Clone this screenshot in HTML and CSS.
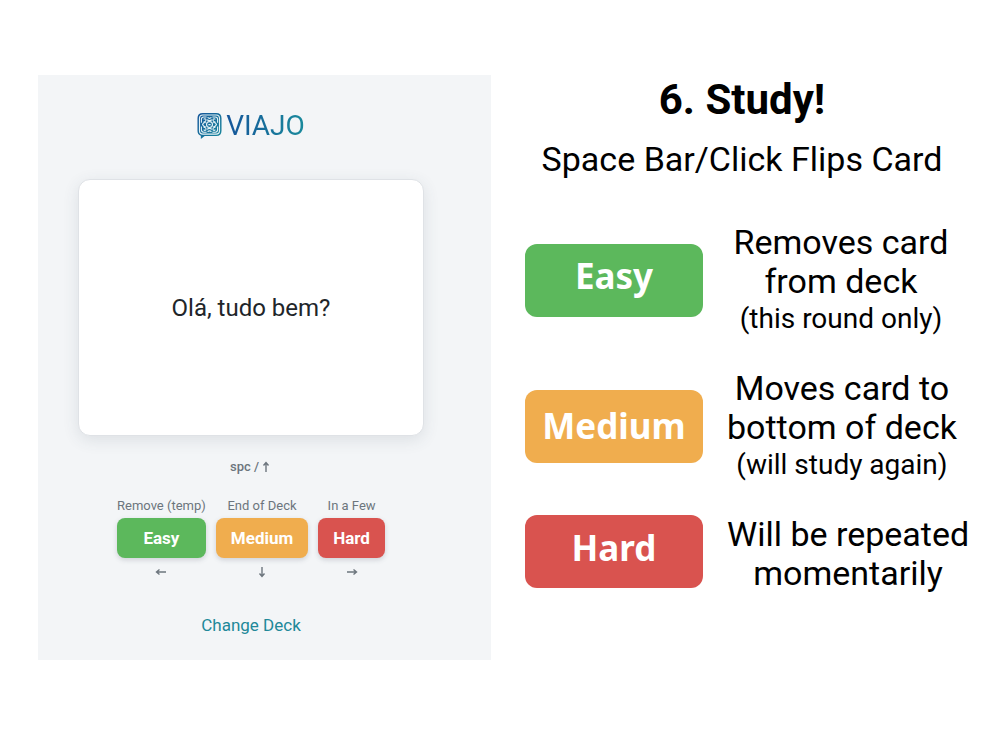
FILE: index.html
```html
<!DOCTYPE html>
<html lang="en">
<head>
<meta charset="utf-8">
<meta name="viewport" content="width=device-width, initial-scale=1">
<title>Viajo – Study</title>
<link rel="stylesheet" href="styles.css">
</head>
<body>
<main class="slide">
  <section class="app">
    <div class="logo">
      <svg class="logo-mark" viewBox="0 0 26 28" fill="none" aria-hidden="true">
        <defs>
          <linearGradient id="brand" x1="0" y1="0" x2="1" y2="1">
            <stop offset="0" stop-color="#15559a"/>
            <stop offset="1" stop-color="#198a9c"/>
          </linearGradient>
          <g id="scroll">
            <path d="M4.600 10.500V7Q4.600 4.600 7 4.600H10M6.800 9.800Q9.800 9.500 9.300 7Q8.200 5.800 6.900 7.200"/>
          </g>
        </defs>
        <path d="M6 .5H20Q25.500 .5 25.500 6V19Q25.500 24.500 20 24.500H8L4 27.500V24.200Q.5 23 .5 19V6Q.5 .5 6 .5Z" fill="url(#brand)"/>
        <g stroke="#e4f1f5" stroke-width="1.200">
          <rect x="2.600" y="2.600" width="20.800" height="19.800" rx="3.500"/>
          <circle cx="13" cy="12.500" r="3.100"/>
          <path d="M9 10.500Q6.800 9.800 5.800 12.500Q6.800 15.200 9 14.500M17 10.500Q19.200 9.800 20.200 12.500Q19.200 15.200 17 14.500"/>
          <path d="M10.500 7.500Q13 9.500 15.500 7.500M11 5Q13 7 15 5M10.500 17.500Q13 15.500 15.500 17.500M11 20Q13 18 15 20M11.800 12.500H14.200"/>
        </g>
        <g stroke="#e4f1f5" stroke-width="1.100">
          <use href="#scroll"/>
          <use href="#scroll" transform="matrix(-1 0 0 1 26 0)"/>
          <use href="#scroll" transform="matrix(1 0 0 -1 0 25)"/>
          <use href="#scroll" transform="matrix(-1 0 0 -1 26 25)"/>
        </g>
      </svg>
      <span class="logo-name">VIAJO</span>
    </div>
    <button class="card" type="button">Olá, tudo bem?</button>
    <p class="flip-hint">spc /
      <svg class="arrow up" viewBox="0 0 12 12" role="img" aria-label="up arrow"><path d="M1 6H10.500M7.500 3.500L10.500 6L7.500 8.500"/></svg>
    </p>
    <div class="answers">
      <div class="answer">
        <label for="easy">Remove (temp)</label>
        <button id="easy" class="choice easy" type="button">Easy</button>
        <svg class="arrow left" viewBox="0 0 12 12" role="img" aria-label="left arrow"><path d="M1 6H10.500M7.500 3.500L10.500 6L7.500 8.500"/></svg>
      </div>
      <div class="answer">
        <label for="medium">End of Deck</label>
        <button id="medium" class="choice medium" type="button">Medium</button>
        <svg class="arrow down" viewBox="0 0 12 12" role="img" aria-label="down arrow"><path d="M1 6H10.500M7.500 3.500L10.500 6L7.500 8.500"/></svg>
      </div>
      <div class="answer">
        <label for="hard">In a Few</label>
        <button id="hard" class="choice hard" type="button">Hard</button>
        <svg class="arrow" viewBox="0 0 12 12" role="img" aria-label="right arrow"><path d="M1 6H10.500M7.500 3.500L10.500 6L7.500 8.500"/></svg>
      </div>
    </div>
    <a class="change" href="#">Change Deck</a>
  </section>

  <section class="guide">
    <h1>6. Study!</h1>
    <p class="lead">Space Bar/Click Flips Card</p>
    <div class="rules">
      <div class="rule">
        <button class="sample easy" type="button">Easy</button>
        <p>Removes card<br>from deck <small>(this round only)</small></p>
      </div>
      <div class="rule">
        <button class="sample medium" type="button">Medium</button>
        <p>Moves card to<br>bottom of deck <small>(will study again)</small></p>
      </div>
      <div class="rule short">
        <button class="sample hard" type="button">Hard</button>
        <p>Will be repeated<br>momentarily</p>
      </div>
    </div>
  </section>
</main>
</body>
</html>
```
FILE: styles.css
```css
* { box-sizing: border-box; }
body {
  margin: 0;
  background: #fff;
  color: #000;
  font-family: Roboto, "Liberation Sans", sans-serif;
}
button { border: 0; font-family: inherit; cursor: pointer; }
p, h1 { margin: 0; font-weight: 400; }

.slide {
  display: grid;
  grid-template-columns: minmax(0, 453fr) minmax(0, 430fr);
  gap: 34px;
  padding: 75px 45px 75px 38px;
}

.app {
  display: flex;
  flex-direction: column;
  align-items: center;
  align-self: start;
  padding: 37px 67px 24px 40px;
  background: #f3f5f7;
}
.logo { display: flex; align-items: center; gap: 4px; }
.logo-mark { width: 25px; height: 28px; }
.logo-name {
  font-size: 28px;
  line-height: 28px;
  color: transparent;
  background: linear-gradient(90deg, #15559a, #198a9c);
  background-clip: text;
  -webkit-background-clip: text;
}
.card {
  width: 100%;
  height: 257px;
  margin-top: 39px;
  border: 1px solid #dfe2e6;
  border-radius: 12px;
  background: #fff;
  color: #212529;
  font-size: 24px;
  box-shadow: 0 4px 16px rgba(60, 70, 90, .12);
}
.flip-hint {
  display: flex;
  align-items: center;
  gap: 1px;
  margin-top: 23px;
  color: #6c757d;
  font-size: 13px;
  font-weight: 500;
  line-height: 16px;
}
.arrow {
  width: 12px;
  height: 12px;
  fill: none;
  stroke: #6c757d;
  stroke-width: 1.400;
}
.up { transform: rotate(-90deg); }
.left { transform: rotate(180deg); }
.down { transform: rotate(90deg); }

.answers { display: flex; gap: 10px; margin-top: 23px; }
.answer { display: flex; flex-direction: column; align-items: center; }
.answer label { color: #6c757d; font-size: 13px; line-height: 16px; margin-bottom: 4px; }
.choice {
  min-width: 100%;
  height: 40px;
  margin-bottom: 8px;
  padding: 0 15px;
  border-radius: 8px;
  color: #fff;
  font-size: 17px;
  font-weight: 700;
  box-shadow: 0 2px 5px rgba(60, 70, 90, .2);
}
.easy { background: #5cb85c; }
.medium { background: #f0ad4e; }
.hard { background: #d9534f; }
.change {
  margin-top: 36px;
  color: #218899;
  font-size: 17px;
  line-height: 22px;
  text-decoration: none;
}

.guide { text-align: center; }
.guide h1 { font-size: 42px; line-height: 50px; font-weight: 700; }
.lead { margin-top: 14px; font-size: 34px; line-height: 40px; white-space: nowrap; }
.guide h1, .lead { margin-left: 4px; }
.rules { display: flex; flex-direction: column; gap: 32px; margin-top: 44px; }
.rule {
  display: grid;
  grid-template-columns: 178px 1fr;
  gap: 24px;
  align-items: center;
}
.rule.short { align-items: start; }
.rule p { font-size: 34px; line-height: 39px; white-space: nowrap; }
.rule small { display: block; font-size: 28px; line-height: 36px; }
.sample {
  height: 73px;
  padding: 0;
  border-radius: 12px;
  color: #fff;
  font-family: "Noto Sans", "Open Sans", sans-serif;
  font-size: 35px;
  font-weight: 700;
}
.sample.easy { padding-bottom: 10px; }
.sample.medium { padding-bottom: 2px; }
.sample.hard { padding-bottom: 8px; }
```
